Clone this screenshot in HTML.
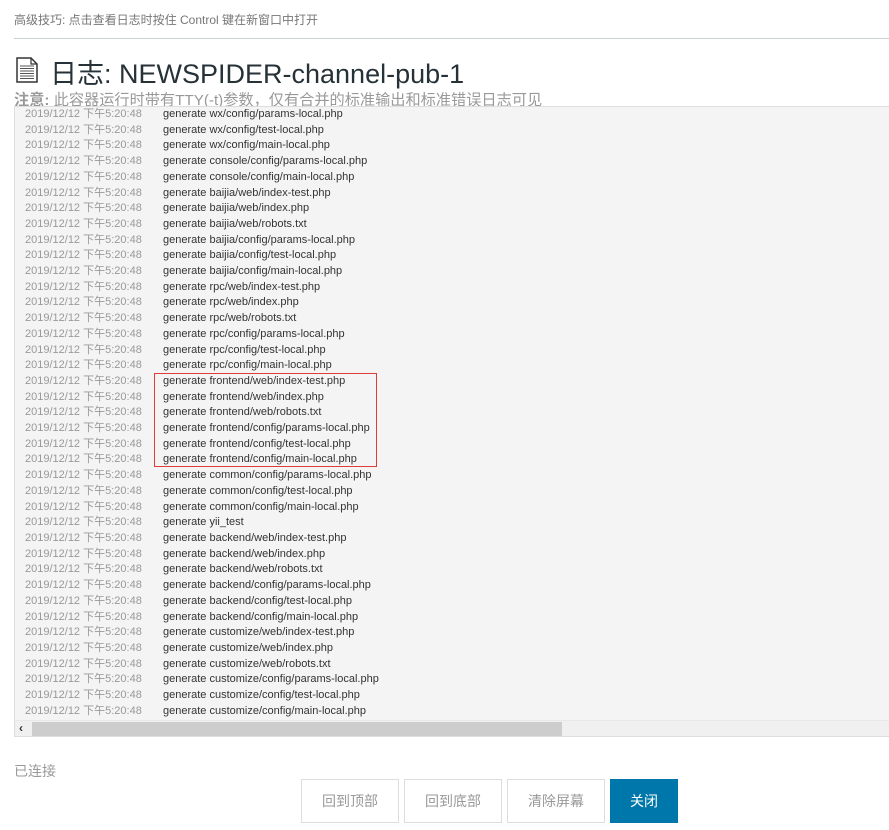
<!DOCTYPE html>
<html><head><meta charset="utf-8">
<style>
*{margin:0;padding:0;box-sizing:border-box}
body{width:889px;height:830px;background:#fff;font-family:"Liberation Sans","Noto Sans CJK SC",sans-serif;position:relative;overflow:hidden;color:#333}
.tip{position:absolute;left:14px;top:11px;font-size:12px;color:#777}
.hr{position:absolute;left:14px;right:0;top:38px;border-top:1px solid #ccd1d4}
h1{position:absolute;left:50px;top:52px;font-size:27px;font-weight:normal;color:#263238;white-space:nowrap}
.icon{position:absolute;left:16px;top:57px}
.note{position:absolute;left:14px;top:88px;font-size:15.2px;color:#999;white-space:nowrap}
.note b{color:#999}
.box{position:absolute;left:14px;top:106px;width:890px;height:631px;background:#f4f4f4;border:1px solid #ddd;overflow:hidden}
.rows{position:absolute;left:10px;top:0px;font-size:11px;line-height:15.7px;white-space:nowrap}
.r span{display:inline-block;width:138px;color:#999}
.r{color:#333}
.red{position:absolute;left:139px;top:266px;width:223px;height:94px;border:1px solid #e23a3a}
.sb{position:absolute;left:0;top:613px;width:890px;height:17px;background:#f0f0f0;border-top:1px solid #e8e8e8}
.thumb{position:absolute;left:17px;top:1px;width:530px;height:14px;background:#cdcdcd}
.arr{position:absolute;left:4px;top:0;font-size:12px;color:#333;font-weight:bold}
.st{position:absolute;left:14px;top:761px;font-size:14px;color:#999}
.btn{position:absolute;top:779px;height:44px;border:1px solid #ddd;background:#fff;color:#999;font-size:14px;text-align:center;line-height:42px}
.btn.p{background:#0077aa;border-color:#0077aa;color:#fff}
</style></head><body>
<div class="tip">高级技巧: 点击查看日志时按住 Control 键在新窗口中打开</div>
<div class="hr"></div>
<svg class="icon" width="22" height="26" viewBox="0 0 22 26"><path d="M1 1h14l6 6v18H1z" fill="#fff" stroke="#333" stroke-width="1.5"/><path d="M15 1v6h6" fill="none" stroke="#333" stroke-width="1.2"/><g stroke="#555" stroke-width="1"><path d="M4 9h14M4 11.5h14M4 14h14M4 16.5h14M4 19h14M4 21.5h14"/></g></svg>
<h1>日志: NEWSPIDER-channel-pub-1</h1>
<div class="note"><b>注意:</b> 此容器运行时带有TTY(-t)参数，仅有合并的标准输出和标准错误日志可见</div>
<div class="box">
<div class="rows">
<div class="r"><span>2019/12/12 下午5:20:48</span>generate wx/config/params-local.php</div>
<div class="r"><span>2019/12/12 下午5:20:48</span>generate wx/config/test-local.php</div>
<div class="r"><span>2019/12/12 下午5:20:48</span>generate wx/config/main-local.php</div>
<div class="r"><span>2019/12/12 下午5:20:48</span>generate console/config/params-local.php</div>
<div class="r"><span>2019/12/12 下午5:20:48</span>generate console/config/main-local.php</div>
<div class="r"><span>2019/12/12 下午5:20:48</span>generate baijia/web/index-test.php</div>
<div class="r"><span>2019/12/12 下午5:20:48</span>generate baijia/web/index.php</div>
<div class="r"><span>2019/12/12 下午5:20:48</span>generate baijia/web/robots.txt</div>
<div class="r"><span>2019/12/12 下午5:20:48</span>generate baijia/config/params-local.php</div>
<div class="r"><span>2019/12/12 下午5:20:48</span>generate baijia/config/test-local.php</div>
<div class="r"><span>2019/12/12 下午5:20:48</span>generate baijia/config/main-local.php</div>
<div class="r"><span>2019/12/12 下午5:20:48</span>generate rpc/web/index-test.php</div>
<div class="r"><span>2019/12/12 下午5:20:48</span>generate rpc/web/index.php</div>
<div class="r"><span>2019/12/12 下午5:20:48</span>generate rpc/web/robots.txt</div>
<div class="r"><span>2019/12/12 下午5:20:48</span>generate rpc/config/params-local.php</div>
<div class="r"><span>2019/12/12 下午5:20:48</span>generate rpc/config/test-local.php</div>
<div class="r"><span>2019/12/12 下午5:20:48</span>generate rpc/config/main-local.php</div>
<div class="r"><span>2019/12/12 下午5:20:48</span>generate frontend/web/index-test.php</div>
<div class="r"><span>2019/12/12 下午5:20:48</span>generate frontend/web/index.php</div>
<div class="r"><span>2019/12/12 下午5:20:48</span>generate frontend/web/robots.txt</div>
<div class="r"><span>2019/12/12 下午5:20:48</span>generate frontend/config/params-local.php</div>
<div class="r"><span>2019/12/12 下午5:20:48</span>generate frontend/config/test-local.php</div>
<div class="r"><span>2019/12/12 下午5:20:48</span>generate frontend/config/main-local.php</div>
<div class="r"><span>2019/12/12 下午5:20:48</span>generate common/config/params-local.php</div>
<div class="r"><span>2019/12/12 下午5:20:48</span>generate common/config/test-local.php</div>
<div class="r"><span>2019/12/12 下午5:20:48</span>generate common/config/main-local.php</div>
<div class="r"><span>2019/12/12 下午5:20:48</span>generate yii_test</div>
<div class="r"><span>2019/12/12 下午5:20:48</span>generate backend/web/index-test.php</div>
<div class="r"><span>2019/12/12 下午5:20:48</span>generate backend/web/index.php</div>
<div class="r"><span>2019/12/12 下午5:20:48</span>generate backend/web/robots.txt</div>
<div class="r"><span>2019/12/12 下午5:20:48</span>generate backend/config/params-local.php</div>
<div class="r"><span>2019/12/12 下午5:20:48</span>generate backend/config/test-local.php</div>
<div class="r"><span>2019/12/12 下午5:20:48</span>generate backend/config/main-local.php</div>
<div class="r"><span>2019/12/12 下午5:20:48</span>generate customize/web/index-test.php</div>
<div class="r"><span>2019/12/12 下午5:20:48</span>generate customize/web/index.php</div>
<div class="r"><span>2019/12/12 下午5:20:48</span>generate customize/web/robots.txt</div>
<div class="r"><span>2019/12/12 下午5:20:48</span>generate customize/config/params-local.php</div>
<div class="r"><span>2019/12/12 下午5:20:48</span>generate customize/config/test-local.php</div>
<div class="r"><span>2019/12/12 下午5:20:48</span>generate customize/config/main-local.php</div>
</div>
<div class="red"></div>
<div class="sb"><div class="arr">‹</div><div class="thumb"></div></div>
</div>
<div class="st">已连接</div>
<div class="btn" style="left:301px;width:98px">回到顶部</div>
<div class="btn" style="left:404px;width:98px">回到底部</div>
<div class="btn" style="left:507px;width:98px">清除屏幕</div>
<div class="btn p" style="left:610px;width:68px">关闭</div>
</body></html>
